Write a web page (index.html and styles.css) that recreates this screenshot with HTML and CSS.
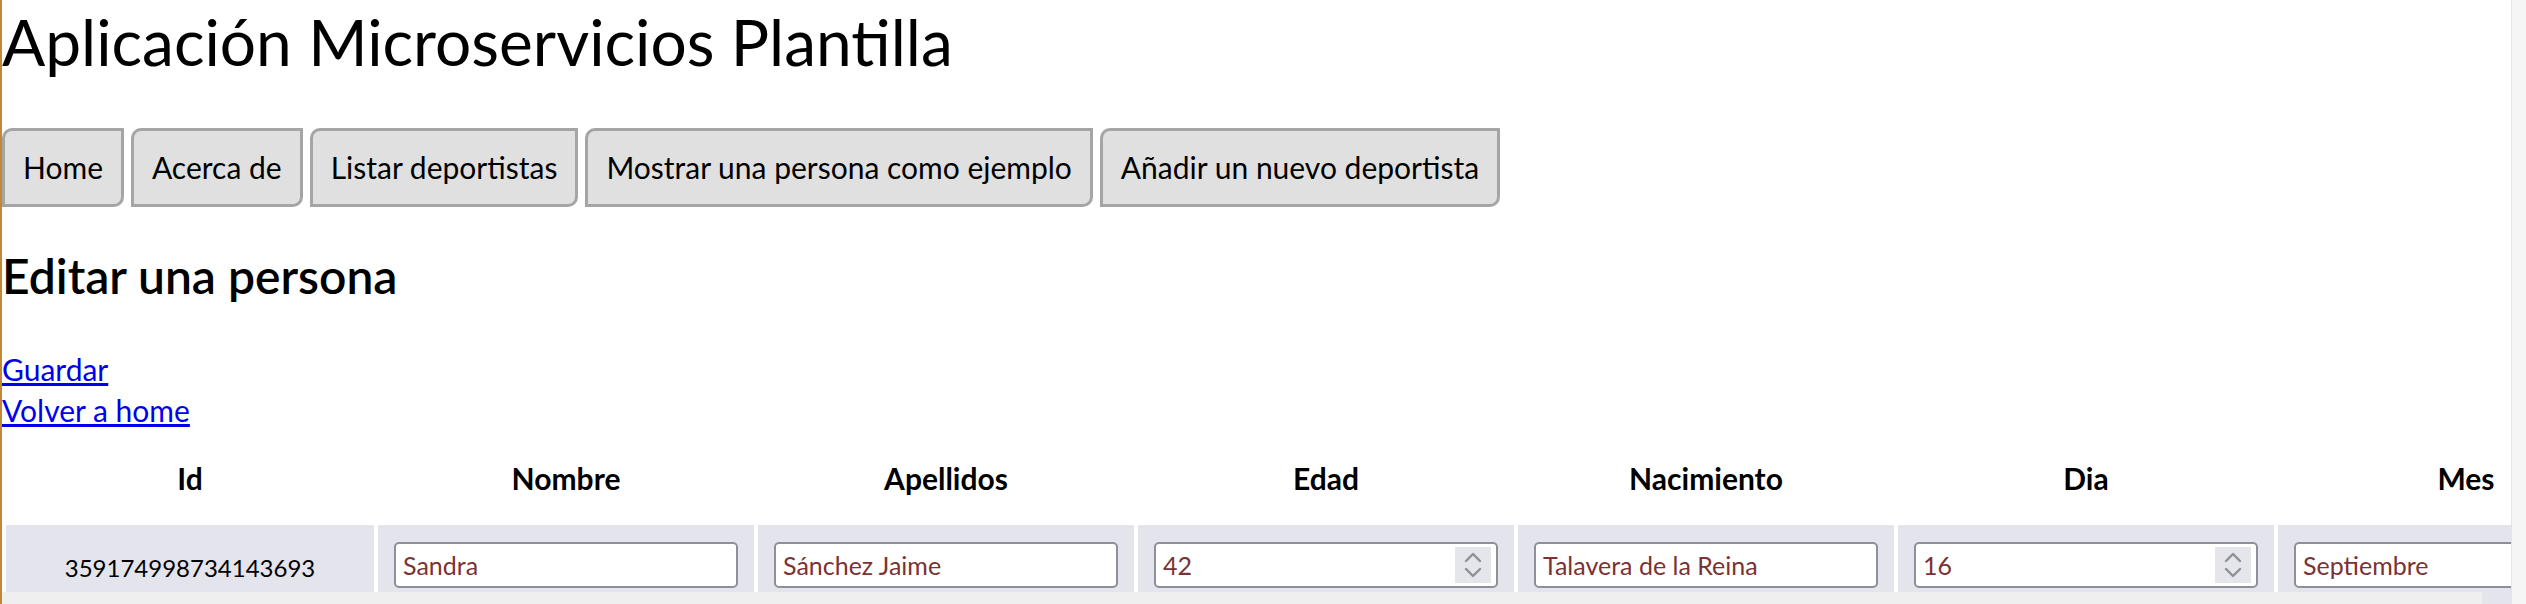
FILE: index.html
```html
<!DOCTYPE html>
<html lang="es">
<head>
<meta charset="utf-8">
<title>Aplicación Microservicios Plantilla</title>
<link rel="stylesheet" href="styles.css">
</head>
<body>
<div class="viewport">
  <div class="page">
    <h1 class="title">Aplicación Microservicios Plantilla</h1>
    <nav class="menu">
      <a class="btn" href="#">Home</a>
      <a class="btn" href="#">Acerca de</a>
      <a class="btn" href="#">Listar deportistas</a>
      <a class="btn" href="#">Mostrar una persona como ejemplo</a>
      <a class="btn" href="#">Añadir un nuevo deportista</a>
    </nav>
    <h2 class="subtitle">Editar una persona</h2>
    <div class="links">
      <a href="#">Guardar</a>
      <a href="#">Volver a home</a>
    </div>
    <table class="grid">
      <thead>
        <tr>
          <th class="c-id">Id</th>
          <th>Nombre</th>
          <th>Apellidos</th>
          <th>Edad</th>
          <th>Nacimiento</th>
          <th>Dia</th>
          <th>Mes</th>
        </tr>
      </thead>
      <tbody>
        <tr>
          <td class="c-id id-text">359174998734143693</td>
          <td><input class="field" type="text" value="Sandra"></td>
          <td><input class="field" type="text" value="Sánchez Jaime"></td>
          <td><div class="field num"><span>42</span><span class="spin"><svg viewBox="0 0 36 36" width="36" height="36"><path d="M11 14 L18 7 L25 14 M11 22 L18 29 L25 22" fill="none" stroke="#8e8e96" stroke-width="2.4" stroke-linecap="round" stroke-linejoin="round"/></svg></span></div></td>
          <td><input class="field" type="text" value="Talavera de la Reina"></td>
          <td><div class="field num"><span>16</span><span class="spin"><svg viewBox="0 0 36 36" width="36" height="36"><path d="M11 14 L18 7 L25 14 M11 22 L18 29 L25 22" fill="none" stroke="#8e8e96" stroke-width="2.4" stroke-linecap="round" stroke-linejoin="round"/></svg></span></div></td>
          <td><input class="field" type="text" value="Septiembre"></td>
        </tr>
      </tbody>
    </table>
    <div class="hbar"></div>
  </div>
  <div class="vbar"></div>
</div>
</body>
</html>
```
FILE: styles.css
```css
html, body {
  margin: 0;
  padding: 0;
  background: #ffffff;
}
body {
  font-family: "Lato", "Open Sans", sans-serif;
  font-size: 30px;
  color: #000;
}
.viewport {
  display: flex;
  height: 604px;
  overflow: hidden;
  border-left: 2px solid #c08838;
}
.page {
  flex: 1;
  min-width: 0;
  overflow: hidden;
  position: relative;
}
.vbar {
  width: 14px;
  background: #f5f5f5;
  border-left: 1px solid #e4e4e4;
}
.title {
  font-size: 64px;
  font-weight: 400;
  margin: 4px 0 0 0;
  line-height: 76px;
}
.menu {
  display: flex;
  gap: 7px;
  margin-top: 48px;
}
.btn {
  display: block;
  padding: 16px 18px 17px 18px;
  border: 3px solid #a5a5a5;
  border-radius: 10px 0 10px 0;
  background: #e0e0e0;
  color: #000;
  text-decoration: none;
  line-height: 40px;
}
.subtitle {
  font-size: 48px;
  font-weight: 600;
  margin: 41px 0 0 0;
  line-height: 56px;
}
.links {
  display: flex;
  flex-direction: column;
  align-items: flex-start;
  margin-top: 45px;
}
.links a {
  color: #0000ee;
  line-height: 41px;
}
.grid {
  border-spacing: 4px;
  table-layout: fixed;
  width: 2656px;
  margin-top: 11px;
}
.grid th {
  width: 376px;
  font-weight: 700;
  padding: 12px 0 23px 0;
  line-height: 40px;
}
.grid th.c-id {
  width: 368px;
}
.grid td {
  background: #e4e4ec;
  padding: 17px 16px;
}
.grid td.id-text {
  text-align: center;
  font-size: 24px;
  padding-top: 19px;
  padding-bottom: 15px;
}
.field {
  box-sizing: border-box;
  display: flex;
  align-items: center;
  justify-content: space-between;
  width: 100%;
  height: 46px;
  margin: 0;
  padding: 0 5px 0 7px;
  border: 2px solid #8f8f98;
  border-radius: 5px;
  background: #fff;
  font-family: "Lato", "Open Sans", sans-serif;
  font-size: 25px;
  color: #7a3232;
}
.spin {
  display: flex;
  width: 36px;
  height: 36px;
  background: #e5e5ec;
}
.hbar {
  position: absolute;
  left: 0;
  bottom: 0;
  width: 2480px;
  height: 12px;
  background: #efefef;
}
```
